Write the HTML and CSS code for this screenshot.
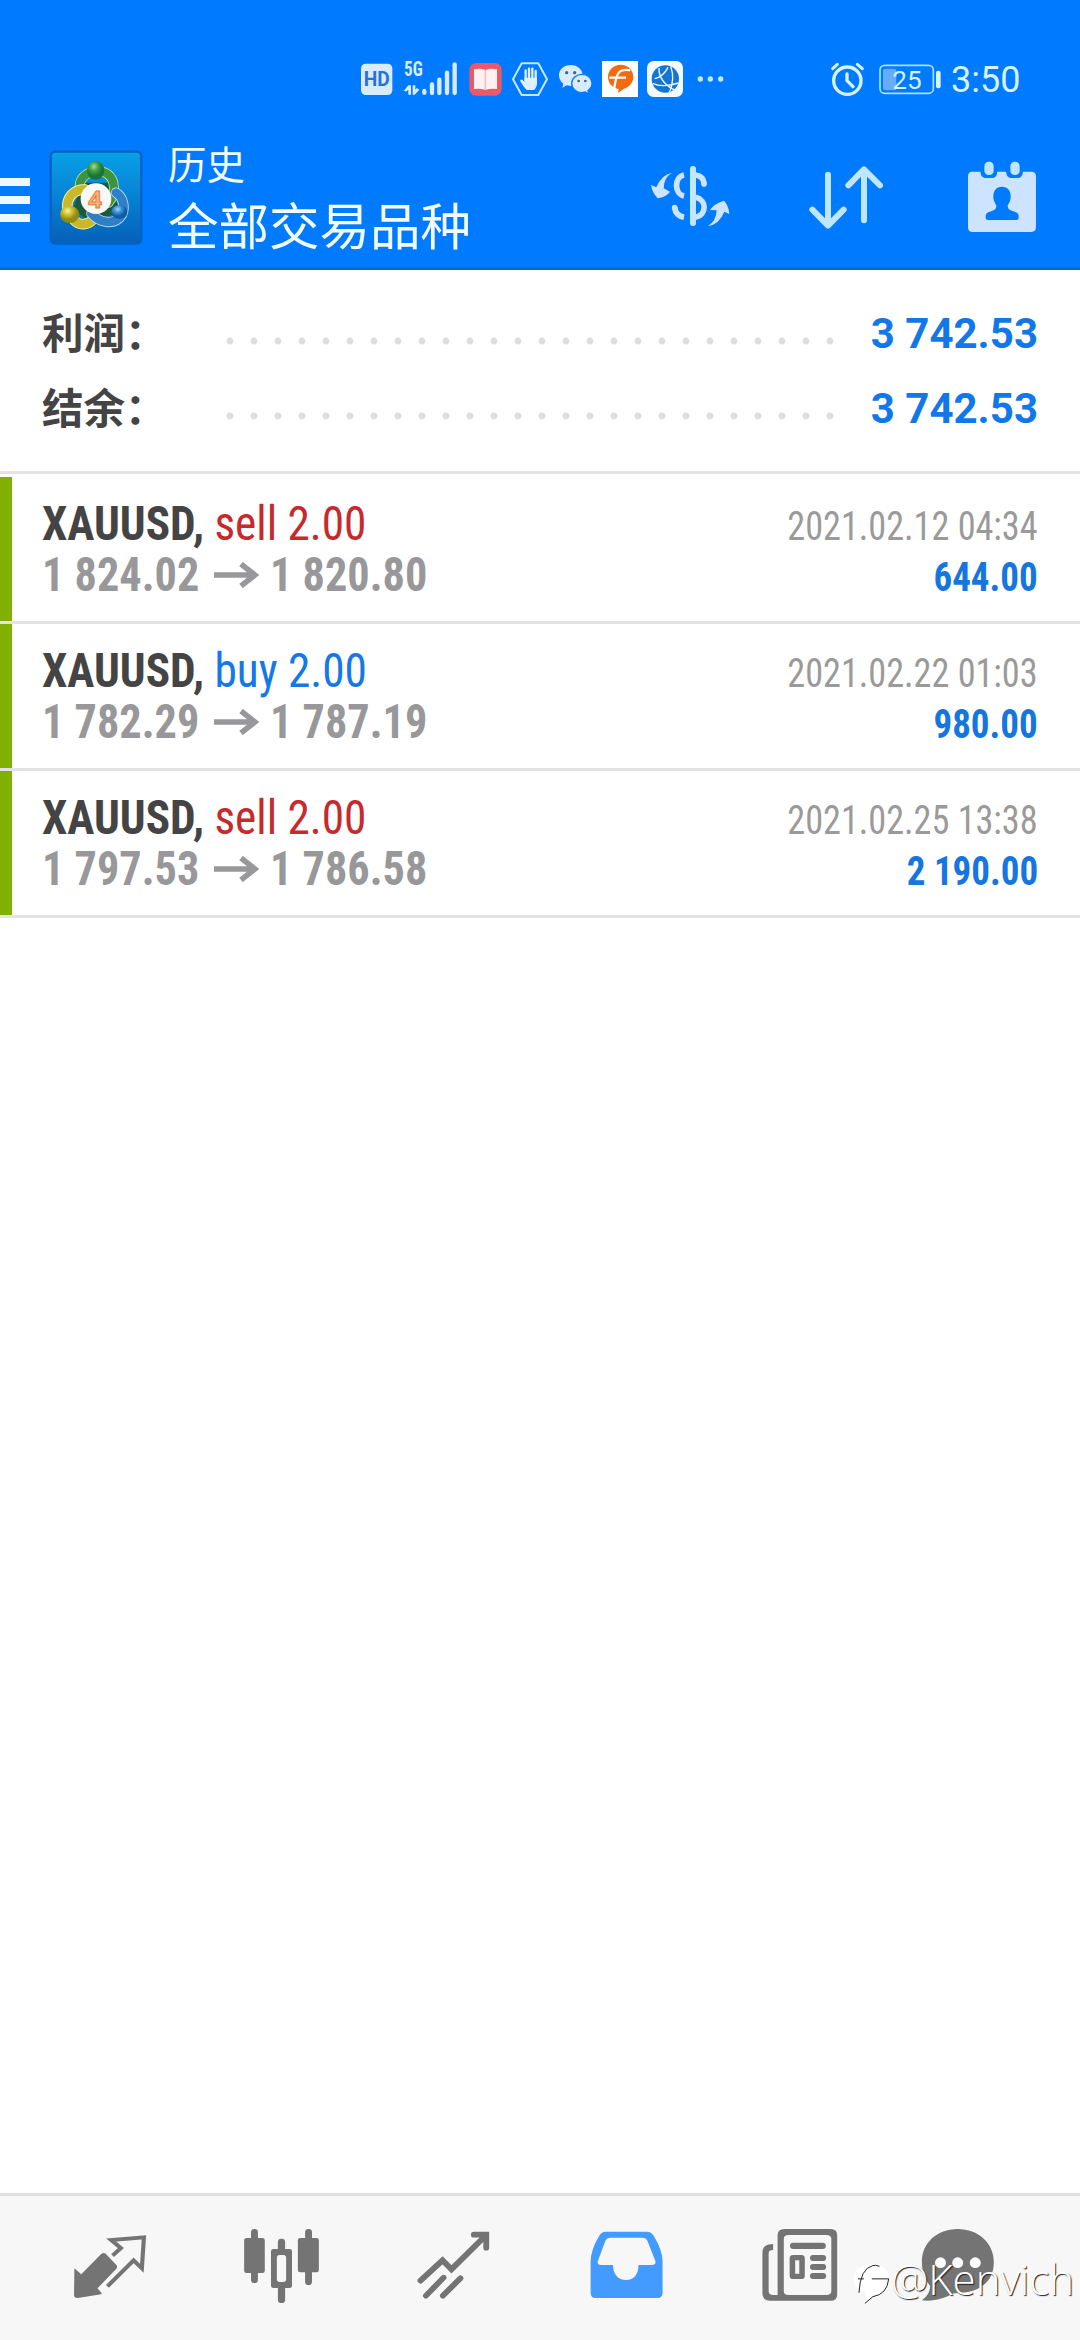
FILE: index.html
```
<!DOCTYPE html>
<html lang="zh-CN">
<head>
<meta charset="utf-8">
<title>历史</title>
<link rel="stylesheet" href="styles.css">
</head>
<body>
<div class="screen">
  <header class="top">
    <div class="status">
      <svg class="hd" viewBox="60 57 99 120"><rect x="63" y="71" width="94" height="94" rx="14" fill="#d9ebff"/><text x="110" y="138" text-anchor="middle" textLength="78" lengthAdjust="spacingAndGlyphs" class="hd-text">HD</text></svg>
      <svg class="signal" viewBox="189 57 165 120"><text x="192" y="109" textLength="56" lengthAdjust="spacingAndGlyphs" class="net-text">5G</text><g stroke="#d9ebff" stroke-width="13" stroke-linecap="round"><path d="M253 153v5M276 133v26M298 119v40M321 98v61M344 73v86"/></g><path d="M191 153l14-17h8v28h-8v-15l-5 5zM218 136h8v13l5-5 7 5-14 15h-6z" fill="#d9ebff"/></svg>
      <svg class="book" viewBox="387 57 99 120"><rect x="388" y="69" width="97" height="98" rx="20" fill="#e85a68"/><path d="M402 88q20-5 34 2q16-7 35-2v59q-20-3-35 3q-16-6-34-3z" fill="#fff0f1"/><path d="M436 90v59" stroke="#f3b9c2" stroke-width="4"/></svg>
      <svg class="hand" viewBox="513 57 114 120"><path d="M545 70h50l26 48-26 47h-50l-26-47z" fill="none" stroke="#c8e7ff" stroke-width="6" stroke-linejoin="round"/><path d="M557 91v30M567 86v35M577 86v35M587 93v30" stroke="#e0f0ff" stroke-width="7" stroke-linecap="round"/><path d="M553 113h38v20q-3 14-10 17h-21q-10-9-19-26q-2-8 6-5l6 7z" fill="#e0f0ff"/></svg>
      <svg class="wechat" viewBox="654 57 105 120"><path d="M692 75c-20 0-35 13-35 31 0 11 5 19 13 25l-3 12 13-7 12 2c20 0 36-14 36-32s-16-31-36-31z" fill="#d9ebff"/><path d="M726 103c-17 0-31 12-31 27s14 28 31 28l9-2 12 6-3-10c7-5 12-13 12-22 0-15-13-27-30-27z" fill="#d9ebff" stroke="#007aff" stroke-width="4"/><g fill="#41658d"><circle cx="680" cy="98" r="5"/><circle cx="704" cy="98" r="5"/><circle cx="716" cy="123" r="4"/><circle cx="736" cy="123" r="4"/></g></svg>
      <svg class="forex" viewBox="786 57 108 120"><rect x="786" y="63" width="108" height="108" fill="#fff"/><path d="M842 74c21 0 38 16 38 37 0 17-12 30-28 35l-18 13 2-12c-19-3-32-18-32-36 0-21 17-37 38-37z" fill="#f36a10"/><path d="M822 150q6-44 16-54q10-9 33-5M808 113h50" fill="none" stroke="#fff" stroke-width="7"/></svg>
      <svg class="globe" viewBox="921 57 108 120"><rect x="921" y="63" width="108" height="108" rx="20" fill="#f3faff"/><circle cx="976" cy="117" r="41" fill="#1476d4"/><path d="M957 84q-2 42 50 68M992 79q14 38-4 79M938 130q28 14 78-1M944 116q26-6 40-34" fill="none" stroke="#f3faff" stroke-width="4"/></svg>
      <svg class="more" viewBox="1071 57 81 120"><g fill="#c8e7ff"><circle cx="1081" cy="117" r="8"/><circle cx="1111" cy="117" r="8"/><circle cx="1142" cy="117" r="8"/></g></svg>
      <svg class="alarm" viewBox="90 57 105 120"><g fill="none" stroke="#d5f3ff" stroke-linecap="round"><circle cx="142" cy="122" r="41" stroke-width="10"/><path d="M141 102v20l18 18" stroke-width="10"/><path d="M98 86l14-13M172 73l15 13" stroke-width="9"/></g></svg>
      <svg class="battery" viewBox="237 57 189 120"><rect x="240" y="76" width="160" height="84" rx="14" fill="none" stroke="#a8e2ff" stroke-width="5"/><rect x="249" y="86" width="40" height="65" rx="7" fill="#66acff"/><rect x="408" y="92" width="14" height="53" rx="6" fill="#d5f3ff"/><text x="321" y="148" text-anchor="middle" textLength="88" lengthAdjust="spacingAndGlyphs" class="bat-text">25</text></svg>
      <span class="clock">3:50</span>
    </div>
    <div class="bar">
      <div class="burger"><i></i><i></i><i></i></div>
      <svg class="logo" viewBox="0 0 300 312">
        <defs>
          <linearGradient id="bg" x1="0" y1="0" x2="0" y2="1"><stop offset="0" stop-color="#08a0e6"/><stop offset=".45" stop-color="#0785d6"/><stop offset="1" stop-color="#0560b8"/></linearGradient>
          <radialGradient id="gn" cx=".4" cy=".3"><stop offset="0" stop-color="#a5dc98"/><stop offset=".5" stop-color="#42a045"/><stop offset="1" stop-color="#1d7335"/></radialGradient>
          <radialGradient id="yl" cx=".4" cy=".3"><stop offset="0" stop-color="#fbf4a0"/><stop offset=".5" stop-color="#cdbf2c"/><stop offset="1" stop-color="#8e8a12"/></radialGradient>
          <radialGradient id="bl" cx=".4" cy=".3"><stop offset="0" stop-color="#9bd8ff"/><stop offset=".5" stop-color="#3a90d6"/><stop offset="1" stop-color="#0f5ba5"/></radialGradient>
        </defs>
        <rect x="14" y="17" width="272" height="276" rx="14" fill="url(#bg)" stroke="#0660c4" stroke-width="7"/>
        <path d="M110 110l80 0 30 80-70 50-70-50z" fill="#1b5a3c"/>
        <g fill="none" stroke-linecap="round">
          <path d="M102 132c-12-60 84-80 100-22 5 20 0 44-14 60" stroke="#b9dfa8" stroke-width="30"/><path d="M102 132c-12-60 84-80 100-22 5 20 0 44-14 60" stroke="#3a9440" stroke-width="25"/>
          <path d="M116 130c-34 0-54 26-52 55M84 222c18 20 42 14 58-2" stroke="#f4eda0" stroke-width="32"/><path d="M116 130c-34 0-54 26-52 55M84 222c18 20 42 14 58-2" stroke="#c9b929" stroke-width="26"/>
          <path d="M210 140c22 14 28 43 18 66-20 32-66 28-92-4" stroke="#b5dcfa" stroke-width="31"/><path d="M210 140c22 14 28 43 18 66-20 32-66 28-92-4" stroke="#2f7fc6" stroke-width="26"/>
        </g>
        <ellipse cx="149" cy="73" rx="26" ry="28" fill="url(#gn)"/><ellipse cx="71" cy="205" rx="29" ry="26" fill="url(#yl)"/><ellipse cx="220" cy="198" rx="24" ry="21" fill="url(#bl)"/>
        <circle cx="150" cy="158" r="46" fill="#f8f8f8"/><text x="147" y="185" text-anchor="middle" class="logo-text">4</text>
      </svg>
      <div class="titles"><span class="sub">历史</span><span class="main">全部交易品种</span></div>
      <svg class="act-dollar" viewBox="90 63 240 207"><g fill="none" stroke="#cce4ff" stroke-width="17"><path d="M192 105c-30 6-30 56 0 63M164 203c2 16 12 26 28 29"/><path d="M164 203v1M252 132v-1" stroke-linecap="round"/><path d="M227 105c14 2 24 10 25 26M227 172c34 8 34 52 0 60"/></g><path d="M219 87v162" stroke="#c0e8ff" stroke-width="18" stroke-linecap="round"/><path d="M156 98q-25 15-25 47l19 10q-10 16-37 20-16-16-20-40l16 7q15-38 47-44z" fill="#cce4ff"/><path d="M264 258q25-15 26-47l-20-1q12-19 42-28 14 14 16 40l-15-7q-15 38-49 43z" fill="#cce4ff"/></svg>
      <svg class="act-sort" viewBox="564 63 228 207"><path d="M624 104v152M577 209l47 48 47-48M732 241v-152M685 136l47-48 48 48" fill="none" stroke="#bfe6ff" stroke-width="18" stroke-linecap="round" stroke-linejoin="round"/></svg>
      <svg class="act-cal" viewBox="1041 63 210 217"><path fill-rule="evenodd" d="M1056 95h25q2 19 17 19h18q14 0 16-19h26q2 19 17 19h18q14 0 16-19h25q14 0 14 14v153q0 14-14 14h-178q-12 0-12-14V109q0-14 12-14zM1146 140c-17 0-26 12-26 29 0 14 5 20 9 27 0 15-8 15-20 19-12 5-12 9-12 18q0 7 7 7h85q7 0 7-7c0-9 0-13-12-18-12-4-21-4-21-19 5-7 9-13 9-27 0-17-9-29-26-29z" fill="#cce4ff"/><rect x="1093" y="65" width="28" height="40" rx="13" fill="#bfe6ff"/><rect x="1171" y="65" width="28" height="40" rx="13" fill="#bfe6ff"/></svg>
    </div>
  </header>

  <section class="summary">
    <div class="sum-row"><span class="label">利润：</span><span class="dots"></span><span class="total">3 742.53</span></div>
    <div class="sum-row"><span class="label">结余：</span><span class="dots"></span><span class="total">3 742.53</span></div>
  </section>

  <main class="deals">
    <article class="deal">
      <div class="left"><div class="pair"><b>XAUUSD,</b> <span class="sell">sell 2.00</span></div><div class="price"><span>1 824.02</span><svg class="arrow" viewBox="0 0 45 26"><path d="M0 13h42M27 2l14 11-14 11" fill="none" stroke="currentColor" stroke-width="5.5"/></svg><span>1 820.80</span></div></div>
      <div class="right"><time>2021.02.12 04:34</time><strong>644.00</strong></div>
    </article>
    <article class="deal">
      <div class="left"><div class="pair"><b>XAUUSD,</b> <span class="buy">buy 2.00</span></div><div class="price"><span>1 782.29</span><svg class="arrow" viewBox="0 0 45 26"><path d="M0 13h42M27 2l14 11-14 11" fill="none" stroke="currentColor" stroke-width="5.5"/></svg><span>1 787.19</span></div></div>
      <div class="right"><time>2021.02.22 01:03</time><strong>980.00</strong></div>
    </article>
    <article class="deal">
      <div class="left"><div class="pair"><b>XAUUSD,</b> <span class="sell">sell 2.00</span></div><div class="price"><span>1 797.53</span><svg class="arrow" viewBox="0 0 45 26"><path d="M0 13h42M27 2l14 11-14 11" fill="none" stroke="currentColor" stroke-width="5.5"/></svg><span>1 786.58</span></div></div>
      <div class="right"><time>2021.02.25 13:38</time><strong>2 190.00</strong></div>
    </article>
  </main>

  <nav class="tabs">
    <svg preserveAspectRatio="none" viewBox="69.7 48 499.5 432"><path d="M216 265l20 18 57-60q7-7 14-2l31 34q4 5 0 11l-55 59 12 14-1 4-68 11q-11 0-11-8z" fill="#747474"/><path d="M327 227l24-23-28-24 95-8-6 93-24-24-76 78" fill="none" stroke="#747474" stroke-width="12"/></svg>
    <svg preserveAspectRatio="none" viewBox="569.2 48 499.5 432"><g fill="#747474"><rect x="709" y="174" width="60" height="105" rx="7"/><rect x="729" y="147" width="20" height="162" rx="10"/><rect x="865" y="174" width="61" height="103" rx="7"/><rect x="886" y="147" width="20" height="168" rx="10"/><rect x="787" y="207" width="61" height="117" rx="7"/><rect x="807" y="176" width="21" height="193" rx="10"/></g><rect x="804" y="225" width="27" height="81" rx="8" fill="#f7f7f7"/></svg>
    <svg preserveAspectRatio="none" viewBox="1068.6 48 499.5 432"><path d="M1221 302l64-61 26 27 98-100M1376 164h36v39M1237 347l51-54M1286 347l51-52" fill="none" stroke="#747474" stroke-width="17" stroke-linecap="round" stroke-linejoin="miter"/></svg>
    <svg preserveAspectRatio="none" viewBox="0 48 499.5 432"><path fill-rule="evenodd" d="M191 155h120q12 0 19 12 26 43 26 78v93q0 15-14 16H162q-15 0-15-16v-93q0-35 25-78 7-12 19-12zM206 173q-12 0-16 9l-22 61q-3 12 10 12h34c0 28 15 45 38 45s36-17 36-45h38q14 0 11-12l-22-58q-4-12-16-12z" fill="#449bff"/></svg>
    <svg preserveAspectRatio="none" viewBox="499.5 48 499.5 432"><path fill-rule="evenodd" d="M710 147h134q19 0 19 18v179q0 18-19 18H666q-20-3-20-21V215q0-22 31-23v18q-13 0-13 9v115q0 11 13 11h13V165q0-18 20-18zM721 165q-13 0-13 12v156q0 12 13 12h110q15 0 15-12V177q0-12-15-12z" fill="#747474"/><rect x="726" y="188" width="104" height="19" rx="9" fill="#747474"/><rect x="733" y="233" width="28" height="56" rx="2" fill="none" stroke="#747474" stroke-width="16"/><path d="M793 234h29M793 261h29M793 288h29" stroke="#747474" stroke-width="18" stroke-linecap="round"/></svg>
    <svg preserveAspectRatio="none" viewBox="999 48 499.5 432"><path d="M1213 147c-60 0-104 42-104 98 0 34 13 58 24 73q0 25-24 43c33 5 65-6 93-21 72 0 116-32 116-93 0-58-45-100-105-100z" fill="#747474"/><g fill="#fff"><circle cx="1163" cy="248" r="16"/><circle cx="1213" cy="248" r="16"/><circle cx="1264" cy="248" r="16"/></g></svg>
  </nav>

  <div class="mark">
    <svg viewBox="0 120 124 140"><path d="M66 132c-32 0-54 17-54 42 0 22 14 38 34 42l3 32 22-21c30-2 47-23 47-51 0-26-20-44-52-44z" fill="#fff"/><path d="M27 218q4-74 42-82 8-3 20 2M24 176h18M66 176h51q-4 46-48 54l-24 20" fill="none" stroke="#222" stroke-width="3"/></svg>
    <span>@Kenvich</span>
  </div>
</div>
</body>
</html>
```
FILE: styles.css
```
* { box-sizing: border-box; }
body { margin: 0; background: #fff; font-family: Roboto, "Noto Sans CJK SC", sans-serif; }
svg { display: block; flex: none; }
.screen { position: relative; width: 1080px; height: 2340px; display: flex; flex-direction: column; overflow: hidden; background: #fff; }

/* header */
.top { height: 270px; background: #007aff; border-bottom: 3px solid #0767d6; }
.status { display: flex; align-items: flex-start; height: 130px; padding: 59px 0 0 360px; }
.status svg { height: 40px; }
.hd { width: 33px; margin-right: 10px; }
.signal { width: 55px; margin-right: 11px; }
.book { width: 33px; margin-right: 9px; }
.hand { width: 38px; margin-right: 9px; }
.wechat { width: 35px; margin-right: 9px; }
.forex { width: 36px; margin-right: 9px; }
.globe { width: 36px; margin-right: 14px; }
.more { width: 27px; margin-right: 106px; }
.alarm { width: 35px; margin-right: 14px; }
.battery { width: 63px; margin-right: 9px; }
.hd-text { font: 700 58px Roboto, sans-serif; fill: #2274d8; }
.net-text { font: 700 60px "Roboto Condensed", Roboto, sans-serif; fill: #d9ebff; }
.bat-text { font: 400 79px Roboto, sans-serif; fill: #d5f3ff; }
.clock { font-size: 36px; line-height: 43px; color: #d5f3ff; }
.bar { display: flex; align-items: flex-start; height: 137px; }
.burger { display: flex; flex-direction: column; gap: 10px; width: 30px; margin: 48px 16px 0 0; }
.burger i { height: 8px; background: #eef8ff; }
.logo { width: 100px; height: 104px; margin: 16px 22px 0 0; }
.logo-text { font: 700 72px "Open Sans", sans-serif; fill: #f8b47c; stroke: #e87a30; stroke-width: 3px; }
.titles { display: flex; flex-direction: column; width: 482px; color: #f2fbff; }
.sub { font: 400 38.5px/50px "Noto Sans CJK SC", sans-serif; margin-top: 7px; }
.main { font: 400 50.5px/70px "Noto Sans CJK SC", sans-serif; margin-top: 1px; }
.act-dollar { width: 80px; height: 69px; margin: 31px 78px 0 0; }
.act-sort { width: 76px; height: 69px; margin: 31px 83px 0 0; }
.act-cal { width: 70px; height: 72.3px; margin-top: 31px; }

/* totals */
.summary { height: 204px; padding: 26px 42px 0; border-bottom: 3px solid #e3e3e3; }
.sum-row { display: flex; align-items: center; height: 75px; }
.label { width: 176px; font: 700 41.5px/60px "Noto Sans CJK SC", sans-serif; color: #444; margin-top: -5px; }
.dots { width: 624px; height: 24px; margin-top: 15px; background: radial-gradient(circle at 12px 12px, #dedede 3px, transparent 4px) 0 0 / 24px 24px; }
.total { flex: 1; text-align: right; font: 700 42px/60px Roboto, sans-serif; color: #1278ea; white-space: nowrap; margin-top: 1px; }

/* deals */
.deals { flex: 1; padding-top: 3px; font-family: "Roboto Condensed", Roboto, sans-serif; }
.deal { display: flex; justify-content: space-between; height: 147px; padding: 21px 42px 0; border-bottom: 3px solid #e3e3e3; background: linear-gradient(#80b000, #80b000) 0 0 / 12px 100% no-repeat; }
.pair { height: 51px; line-height: 51px; font-size: 48px; white-space: pre; color: #444; transform: scaleX(.943); transform-origin: left; }
.sell { color: #c62a2c; }
.buy { color: #1478e6; }
.price { display: flex; align-items: center; height: 51px; line-height: 51px; font-size: 48px; font-weight: 700; color: #98989a; }
.price span { width: 158px; white-space: nowrap; transform: scaleX(.922); transform-origin: left; }
.arrow { width: 45px; height: 26px; margin: 0 11px 0 14px; }
.right { display: flex; flex-direction: column; align-items: flex-end; padding-top: 3px; font-size: 40px; }
.right time { height: 51px; line-height: 51px; color: #9a9a9a; transform: scaleX(.905); transform-origin: right; }
.right strong { height: 51px; line-height: 51px; font-weight: 700; color: #1576e0; transform: scaleX(.925); transform-origin: right; }

/* tab bar */
.tabs { display: flex; height: 147px; padding-left: 24px; background: #f7f7f7; border-top: 3px solid #dfdfdf; }
.tabs svg { width: 172px; height: 144px; }

/* author tag over the tab bar */
.mark { position: absolute; left: 850px; top: 2260px; display: flex; color: #fff; font: 400 42px/50px "Open Sans", "Noto Sans", sans-serif; }
.mark svg { width: 41px; height: 47px; }
.mark span { margin-top: -6px; font-weight: 300; text-shadow: 1px 1px 1px #222; }
```
